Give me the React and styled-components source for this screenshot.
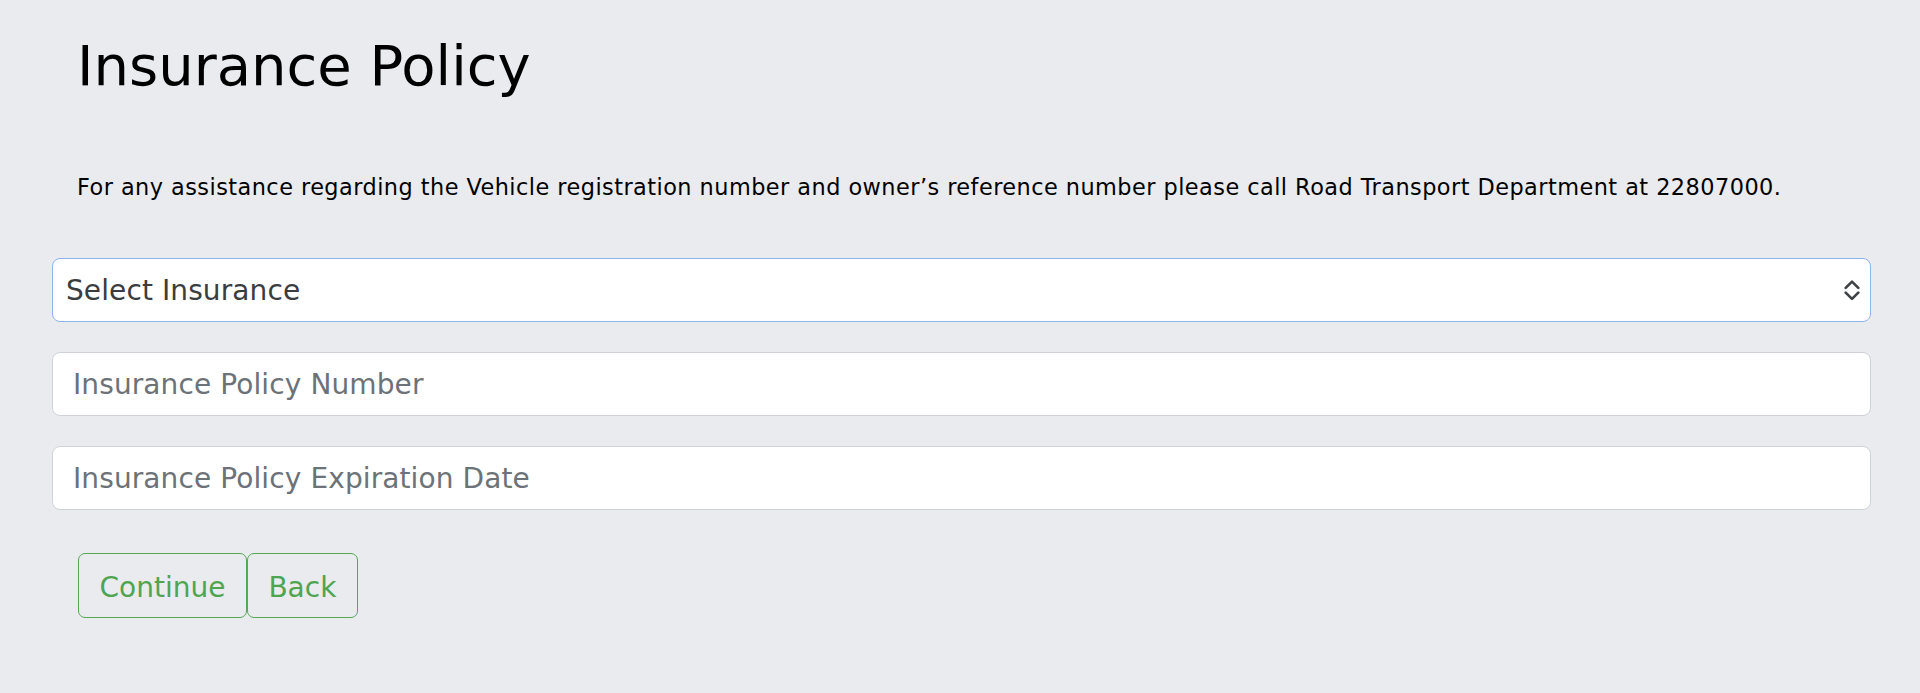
import React from "react";
import styled, { createGlobalStyle } from "styled-components";

const GlobalStyle = createGlobalStyle`
  html, body {
    margin: 0;
    padding: 0;
    background: #e9ebef;
  }
  body {
    font-family: "DejaVu Sans", Verdana, sans-serif;
    color: #000;
  }
  * {
    box-sizing: border-box;
  }
`;

function App() {
  return (
    <>
      <GlobalStyle />
      <Page>
        <Intro>
          <Title>Insurance Policy</Title>
          <Notice>
            For any assistance regarding the Vehicle registration number and
            owner’s reference number please call Road Transport Department at
            22807000.
          </Notice>
        </Intro>
        <Form onSubmit={(e) => e.preventDefault()}>
          <SelectWrap>
            <Select defaultValue="">
              <option value="">Select Insurance</option>
              <option value="comprehensive">Comprehensive</option>
              <option value="third-party">Third Party</option>
            </Select>
            <Chevrons viewBox="0 0 15 20" aria-hidden="true">
              <path d="M1.5 8 L7.5 2 L13.5 8" />
              <path d="M1.5 12.5 L7.5 18.5 L13.5 12.5" />
            </Chevrons>
          </SelectWrap>
          <Input type="text" placeholder="Insurance Policy Number" />
          <Input type="text" placeholder="Insurance Policy Expiration Date" />
          <ButtonRow>
            <OutlineButton type="submit">Continue</OutlineButton>
            <OutlineButton type="button">Back</OutlineButton>
          </ButtonRow>
        </Form>
      </Page>
    </>
  );
}

const Page = styled.div`
  width: 100%;
  min-height: 693px;
  padding: 32px 49px 40px 52px;
`;

const Intro = styled.div`
  padding-left: 25px;
`;

const Title = styled.h1`
  margin: 0;
  font-size: 56px;
  font-weight: 400;
  line-height: 1.2;
  color: #000;
`;

const Notice = styled.p`
  margin: 72px 0 0 0;
  font-size: 22.4px;
  letter-spacing: 0.46px;
  line-height: 1.5;
  color: #000;
`;

const Form = styled.form`
  margin-top: 53px;
  display: flex;
  flex-direction: column;
  gap: 30px;
`;

const SelectWrap = styled.div`
  position: relative;
  width: 100%;
`;

const Select = styled.select`
  appearance: none;
  -webkit-appearance: none;
  display: block;
  width: 100%;
  height: 64.5px;
  padding: 0 48px 0 13px;
  font-family: "DejaVu Sans", Verdana, sans-serif;
  font-size: 28px;
  letter-spacing: 0.1px;
  color: #3a3d40;
  background: #fff;
  border: 1px solid #8db5ee;
  border-radius: 8px;
  outline: none;
`;

const Chevrons = styled.svg`
  position: absolute;
  right: 11px;
  top: 50%;
  width: 16px;
  height: 21px;
  transform: translateY(-50%);
  pointer-events: none;
  fill: none;
  stroke: #404346;
  stroke-width: 2.5;
  stroke-linecap: round;
  stroke-linejoin: round;
`;

const Input = styled.input`
  display: block;
  width: 100%;
  height: 64px;
  padding: 0 20px;
  font-family: "DejaVu Sans", Verdana, sans-serif;
  font-size: 28px;
  letter-spacing: 0.1px;
  color: #212529;
  background: #fff;
  border: 1px solid #cfd3d8;
  border-radius: 8px;
  outline: none;

  &::placeholder {
    color: #6c7278;
  }
`;

const ButtonRow = styled.div`
  display: flex;
  margin-top: 13px;
  padding-left: 26px;
`;

const OutlineButton = styled.button`
  height: 65px;
  padding: 4px 20.5px 0;
  font-family: "DejaVu Sans", Verdana, sans-serif;
  font-size: 28px;
  line-height: 1.5;
  color: #4fa54f;
  background: transparent;
  border: 1.5px solid #56a856;
  border-radius: 7px;
  cursor: pointer;
`;

export default App;
